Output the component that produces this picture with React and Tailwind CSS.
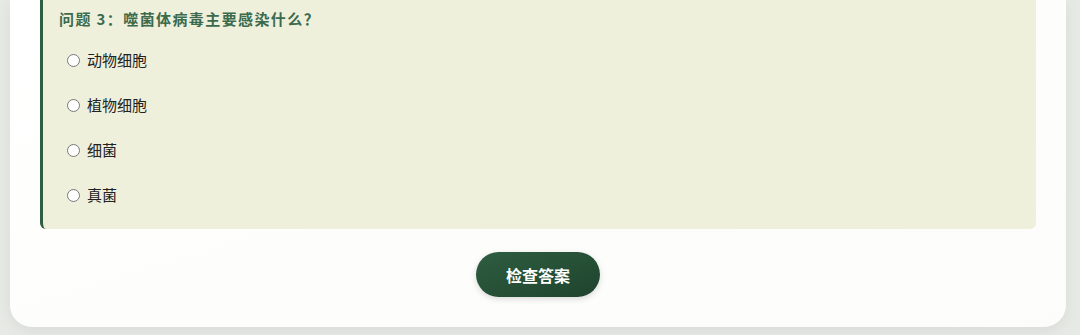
export default function App() {
  const options = ['动物细胞', '植物细胞', '细菌', '真菌'];

  return (
    <div className="min-h-[335px] w-full bg-[#e6e9e4] pl-[10px] pr-[14px] pb-[8px] font-['Noto_Sans_CJK_SC',sans-serif]">
      <div className="relative rounded-b-[22px] bg-gradient-to-br from-[#ffffff] to-[#fcfcfa] px-[30px] pb-[30px] shadow-[0_4px_14px_rgba(0,0,0,0.06)]">
        {/* Question box, top cut off by the viewport */}
        <div className="-mt-[1px] rounded-b-[6px] border-l-[3px] border-[#2f5e40] bg-[#eff0dc] pl-[16px] pr-[20px] pb-[11px]">
          <h3 className="pt-[9px] text-[15px] font-bold leading-[21px] tracking-[1.4px] text-[#3b6a4c]">
            问题 3：噬菌体病毒主要感染什么？
          </h3>
          <div className="mt-[9px]">
            {options.map((opt) => (
              <label key={opt} className="flex h-[45px] cursor-pointer items-center gap-[7px] pl-[8px] text-[15px] text-[#222]">
                <input type="radio" name="q3" className="m-0 h-[13px] w-[13px] accent-[#2f5e40]" />
                <span>{opt}</span>
              </label>
            ))}
          </div>
        </div>

        <div className="mt-[23px] flex justify-center">
          <button className="h-[45px] rounded-full bg-gradient-to-br from-[#2e5e41] to-[#1f432d] px-[30px] text-[16px] font-bold text-white shadow-[0_2px_6px_rgba(0,0,0,0.15)]">
            检查答案
          </button>
        </div>
      </div>
    </div>
  );
}
